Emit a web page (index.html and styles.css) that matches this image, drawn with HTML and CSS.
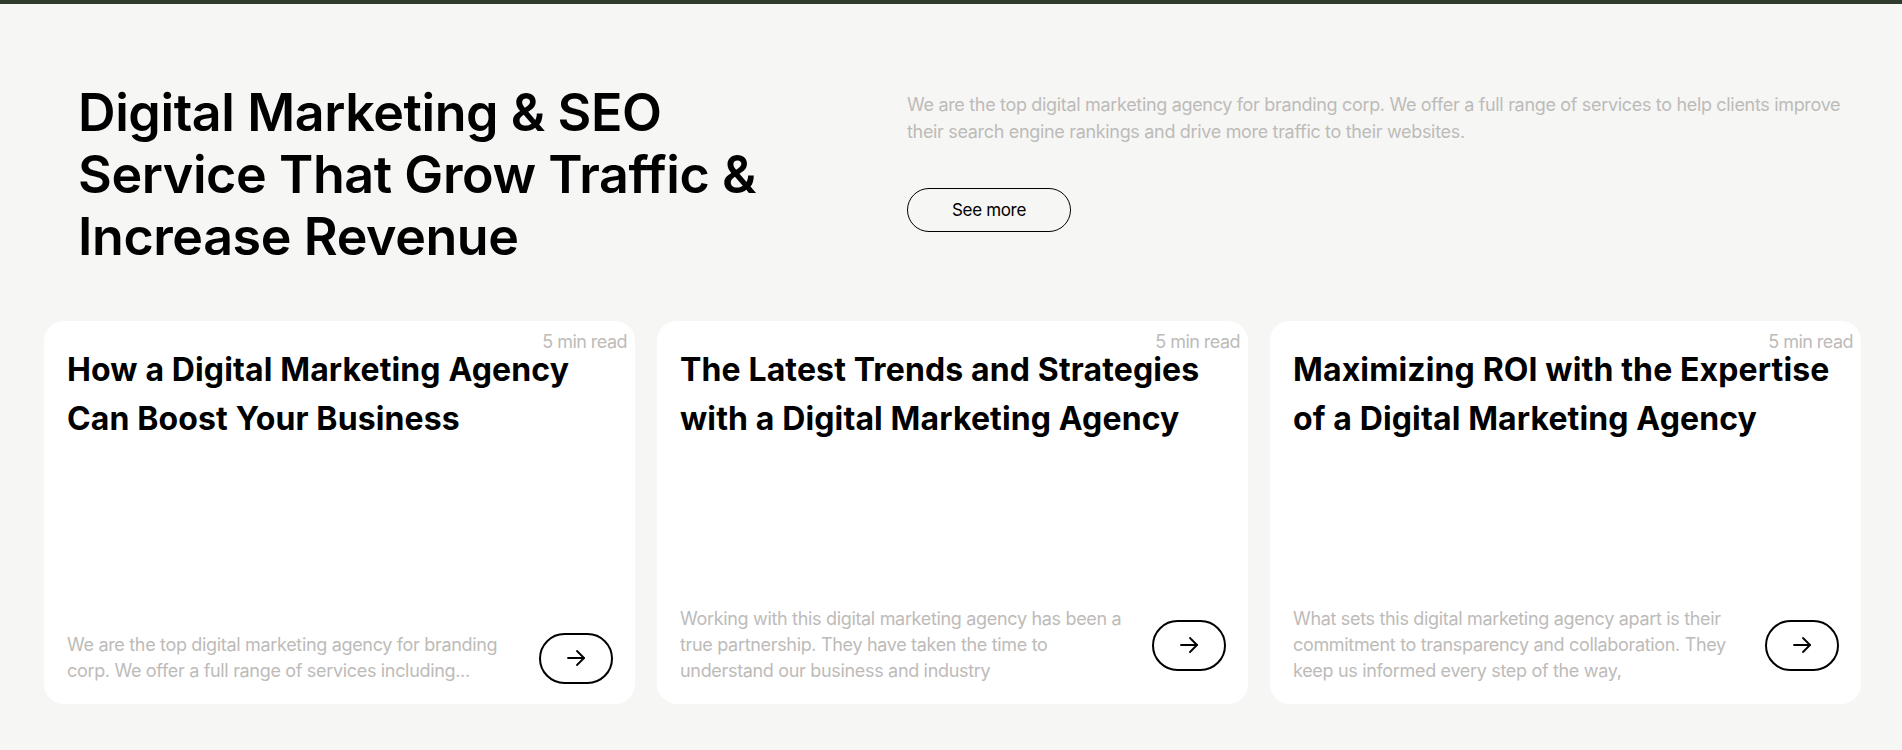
FILE: index.html
```html
<!DOCTYPE html>
<html lang="en">
<head>
<meta charset="utf-8">
<title>Digital Marketing &amp; SEO</title>
<link rel="stylesheet" href="styles.css">
</head>
<body>
<div class="topbar"></div>
<section class="page">
  <header class="intro">
    <h1 class="intro-title">Digital Marketing &amp; SEO Service That Grow Traffic &amp; Increase Revenue</h1>
    <div class="intro-side">
      <p class="intro-text">We are the top digital marketing agency for branding corp. We offer a full range of services to help clients improve their search engine rankings and drive more traffic to their websites.</p>
      <a class="btn-outline" href="#">See more</a>
    </div>
  </header>
  <div class="cards">
    <article class="card">
      <div class="card-meta">5 min read</div>
      <h2 class="card-title">How a Digital Marketing Agency Can Boost Your Business</h2>
      <div class="card-foot">
        <p class="card-text">We are the top digital marketing agency for branding corp. We offer a full range of services including...</p>
        <a class="arrow-btn" href="#" aria-label="Read more">
          <svg width="24" height="24" viewBox="0 0 24 24" fill="none" stroke="#000" stroke-width="1.8" stroke-linecap="round" stroke-linejoin="round"><line x1="4" y1="12" x2="20" y2="12"/><polyline points="13 5 20 12 13 19"/></svg>
        </a>
      </div>
    </article>
    <article class="card">
      <div class="card-meta">5 min read</div>
      <h2 class="card-title">The Latest Trends and Strategies with a Digital Marketing Agency</h2>
      <div class="card-foot">
        <p class="card-text">Working with this digital marketing agency has been a true partnership. They have taken the time to understand our business and industry</p>
        <a class="arrow-btn" href="#" aria-label="Read more">
          <svg width="24" height="24" viewBox="0 0 24 24" fill="none" stroke="#000" stroke-width="1.8" stroke-linecap="round" stroke-linejoin="round"><line x1="4" y1="12" x2="20" y2="12"/><polyline points="13 5 20 12 13 19"/></svg>
        </a>
      </div>
    </article>
    <article class="card">
      <div class="card-meta">5 min read</div>
      <h2 class="card-title">Maximizing ROI with the Expertise of a Digital Marketing Agency</h2>
      <div class="card-foot">
        <p class="card-text">What sets this digital marketing agency apart is their commitment to transparency and collaboration. They keep us informed every step of the way,</p>
        <a class="arrow-btn" href="#" aria-label="Read more">
          <svg width="24" height="24" viewBox="0 0 24 24" fill="none" stroke="#000" stroke-width="1.8" stroke-linecap="round" stroke-linejoin="round"><line x1="4" y1="12" x2="20" y2="12"/><polyline points="13 5 20 12 13 19"/></svg>
        </a>
      </div>
    </article>
  </div>
</section>
</body>
</html>
```
FILE: styles.css
```css
* { box-sizing: border-box; }
html, body {
  margin: 0;
  padding: 0;
  background: #f6f6f4;
  font-family: Inter, "Liberation Sans", sans-serif;
  color: #000;
}
.topbar {
  height: 4px;
  background: #2f3b2c;
}
.page {
  padding: 0 41px 0 44px;
}
.intro {
  display: flex;
  padding: 78px 0 0 34px;
}
.intro-title {
  width: 829px;
  flex: none;
  margin: 0;
  font-size: 52px;
  line-height: 62px;
  font-weight: 600;
  letter-spacing: -0.008em;
  padding-right: 120px;
}
.intro-side {
  flex: 1;
  padding-top: 9px;
}
.intro-text {
  margin: 0;
  font-size: 18px;
  line-height: 27px;
  color: #bdbbb9;
  letter-spacing: -0.018em;
}
.btn-outline {
  display: inline-flex;
  align-items: center;
  justify-content: center;
  margin-top: 43px;
  width: 164px;
  height: 44px;
  border: 1px solid #000;
  border-radius: 22px;
  color: #000;
  text-decoration: none;
  font-size: 17px;
  letter-spacing: -0.02em;
}
.cards {
  display: grid;
  grid-template-columns: repeat(3, 1fr);
  gap: 22px;
  margin-top: 53px;
}
.card {
  height: 383px;
  background: #fff;
  border-radius: 20px;
  padding: 16px 22px 20px 23px;
  display: flex;
  flex-direction: column;
}
.card-meta {
  text-align: right;
  margin-right: -14px;
  font-size: 18px;
  line-height: 10px;
  color: #bdbbb9;
  letter-spacing: -0.03em;
}
.card-title {
  margin: -2px 0 0;
  font-size: 32px;
  line-height: 49px;
  font-weight: 700;
  letter-spacing: 0.004em;
}
.card-foot {
  margin-top: auto;
  display: flex;
  align-items: center;
  justify-content: space-between;
}
.card-text {
  margin: 0;
  width: 450px;
  font-size: 18px;
  line-height: 26px;
  color: #bdbbb9;
  letter-spacing: -0.018em;
}
.arrow-btn {
  flex: none;
  width: 74px;
  height: 51px;
  border: 2px solid #000;
  border-radius: 26px;
  display: flex;
  align-items: center;
  justify-content: center;
}
```
